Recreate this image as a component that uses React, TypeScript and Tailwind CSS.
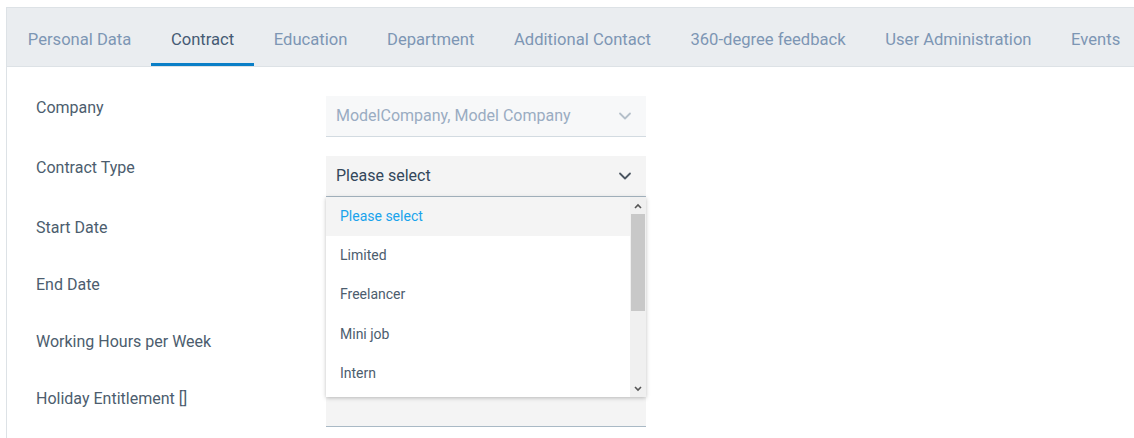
import React from "react";

const tabs = [
  "Personal Data",
  "Contract",
  "Education",
  "Department",
  "Additional Contact",
  "360-degree feedback",
  "User Administration",
  "Events",
];

const options = ["Please select", "Limited", "Freelancer", "Mini job", "Intern"];

function Chevron({ className }: { className?: string }) {
  return (
    <svg width="14" height="14" viewBox="0 0 14 14" className={className}>
      <polyline
        points="2,4.5 7,9.5 12,4.5"
        fill="none"
        stroke="currentColor"
        strokeWidth="1.8"
        strokeLinecap="round"
        strokeLinejoin="round"
      />
    </svg>
  );
}

function Row({
  label,
  height,
  children,
}: {
  label: string;
  height: string;
  children?: React.ReactNode;
}) {
  return (
    <div className={`flex ${height}`}>
      <div className="w-[290px] text-[16px] leading-[24px] text-[#4c5d6e]">{label}</div>
      <div className="relative w-[320px]">{children}</div>
    </div>
  );
}

export default function App() {
  return (
    <div
      className="min-h-screen bg-white pt-[7px] pl-[6px]"
      style={{ fontFamily: "Roboto, 'Liberation Sans', sans-serif" }}
    >
      <div className="border-l border-t border-[#dde2e6] h-[431px] overflow-hidden">
        <div className="flex h-[59px] bg-[#eaedf0] border-b border-[#dde2e6] pl-[1px] whitespace-nowrap">
          {tabs.map((t) => (
            <div
              key={t}
              className={`px-[19.8px] flex items-center text-[16.6px] border-b-[3px] ${
                t === "Contract"
                  ? "text-[#455b74] border-[#0a7fc7]"
                  : "text-[#7d96b4] border-transparent"
              }`}
            >
              <span className="pt-[10px]">{t}</span>
            </div>
          ))}
        </div>

        <div className="pt-[29px] pl-[29px]">
          <Row label="Company" height="h-[60px]">
            <div className="flex items-center justify-between h-[41px] bg-[#f7f8f9] border-b border-[#d3dbe1] pl-[10px] pr-[14px] text-[16px] text-[#9aacc2]">
              <span>ModelCompany, Model Company</span>
              <Chevron className="text-[#b5c0ca]" />
            </div>
          </Row>
          <Row label="Contract Type" height="h-[60px]">
            <div className="flex items-center justify-between h-[41px] bg-[#f4f4f4] border-b border-[#a9b9c5] pl-[10px] pr-[14px] text-[16px] text-[#33475b]">
              <span>Please select</span>
              <Chevron className="text-[#4a5560]" />
            </div>
            <div className="absolute left-0 top-[41px] w-[320px] h-[200px] bg-white shadow-[0_1px_4px_rgba(0,0,0,0.25)] z-10 flex">
              <div className="flex-1">
                {options.map((o, i) => (
                  <div
                    key={o}
                    className={`h-[39.2px] flex items-center pl-[14px] text-[14px] ${
                      i === 0 ? "bg-[#f4f4f4] text-[#19a3ec]" : "text-[#4c5d6e]"
                    }`}
                  >
                    <span>{o}</span>
                  </div>
                ))}
              </div>
              <div className="w-[16px] bg-[#f0f0f0] flex flex-col">
                <div className="h-[17px] flex items-center justify-center">
                  <svg width="8" height="6" viewBox="0 0 8 6">
                    <polyline points="1,5 4,2 7,5" fill="none" stroke="#555" strokeWidth="1.6" />
                  </svg>
                </div>
                <div className="h-[97px] mx-[1px] bg-[#c8c8c8]" />
                <div className="flex-1" />
                <div className="h-[17px] flex items-center justify-center">
                  <svg width="8" height="6" viewBox="0 0 8 6">
                    <polyline points="1,1 4,4 7,1" fill="none" stroke="#555" strokeWidth="1.6" />
                  </svg>
                </div>
              </div>
            </div>
          </Row>
          <Row label="Start Date" height="h-[57px]">
            <div className="h-[41px] bg-[#f4f4f4] border-b border-[#a9b9c5]" />
          </Row>
          <Row label="End Date" height="h-[57px]">
            <div className="h-[41px] bg-[#f4f4f4] border-b border-[#a9b9c5]" />
          </Row>
          <Row label="Working Hours per Week" height="h-[57px]">
            <div className="h-[41px] bg-[#f4f4f4] border-b border-[#a9b9c5]" />
          </Row>
          <Row label="Holiday Entitlement []" height="h-[56px]">
            <div className="h-[40px] bg-[#f4f4f4] border-b border-[#a9b9c5]" />
          </Row>
        </div>
      </div>
    </div>
  );
}
